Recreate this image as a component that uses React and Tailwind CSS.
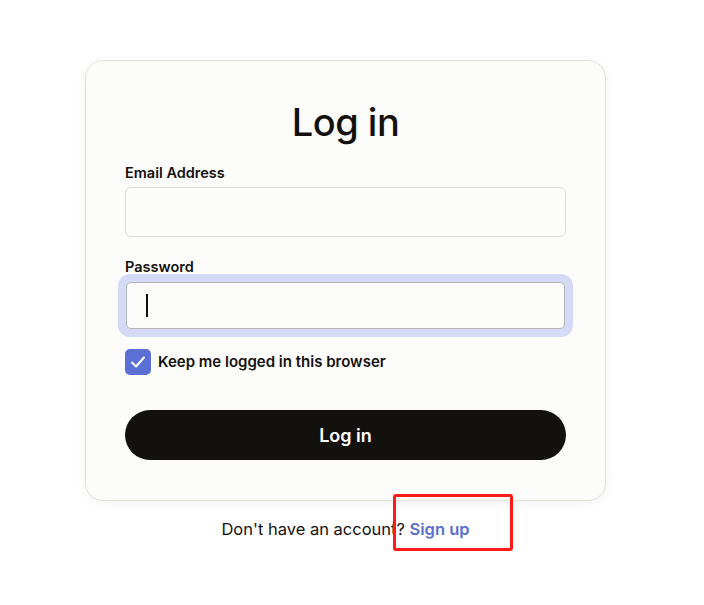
import React from "react";

export default function App() {
  return (
    <div className="relative w-[704px] h-[605px] bg-white" style={{ fontFamily: '"Inter", "Noto Sans", sans-serif' }}>
      <div className="flex flex-col items-center w-[521px] ml-[85px] pt-[60px]">
        <div className="w-[521px] h-[441px] rounded-[18px] border border-[#e3e0d8] bg-[#fcfcfa] shadow-[0_2px_12px_rgba(0,0,0,0.06)] px-[39px] pt-[38px]">
          <h1 className="text-center text-[38px] leading-[46px] font-medium tracking-[-0.5px] text-[#13110e]">Log in</h1>
          <label className="block mt-[19px] text-[14.5px] leading-[18px] font-semibold text-[#13110e]">Email Address</label>
          <div className="mt-[5px] h-[50px] rounded-[6px] border border-[#dedbd3] bg-[#fcfcfa]"></div>
          <label className="block mt-[21px] text-[14.5px] leading-[18px] font-semibold text-[#13110e]">Password</label>
          <div className="-mx-[7px] -mt-[2px] rounded-[12px] bg-[#d5dbf7] p-[8px]">
            <div className="h-[47px] rounded-[5px] border border-[#b5b5b5] bg-[#fcfcfa] flex items-center pl-[19px]">
              <div className="w-[1.5px] h-[23px] bg-[#13110e]"></div>
            </div>
          </div>
          <div className="mt-[12px] flex items-center gap-[7px]">
            <div className="w-[26px] h-[26px] rounded-[5px] bg-[#5b6fd4] flex items-center justify-center">
              <svg width="18" height="18" viewBox="0 0 18 18" fill="none">
                <path d="M3 9.5 L7 13.5 L15 4.5" stroke="white" strokeWidth="2" strokeLinecap="round" strokeLinejoin="round" />
              </svg>
            </div>
            <span className="text-[15px] font-semibold text-[#13110e]">Keep me logged in this browser</span>
          </div>
          <button className="mt-[35px] w-full h-[50px] rounded-full bg-[#13110e] text-white text-[18px] font-semibold">Log in</button>
        </div>
        <p className="mt-[16px] text-[16.5px] text-[#13110e]">
          Don't have an account? <span className="font-semibold text-[#5b6fd0]">Sign up</span>
        </p>
      </div>
      <div className="absolute left-[393px] top-[494px] w-[120px] h-[57px] border-[3px] border-[#ff1a1a] rounded-[3px]"></div>
    </div>
  );
}
